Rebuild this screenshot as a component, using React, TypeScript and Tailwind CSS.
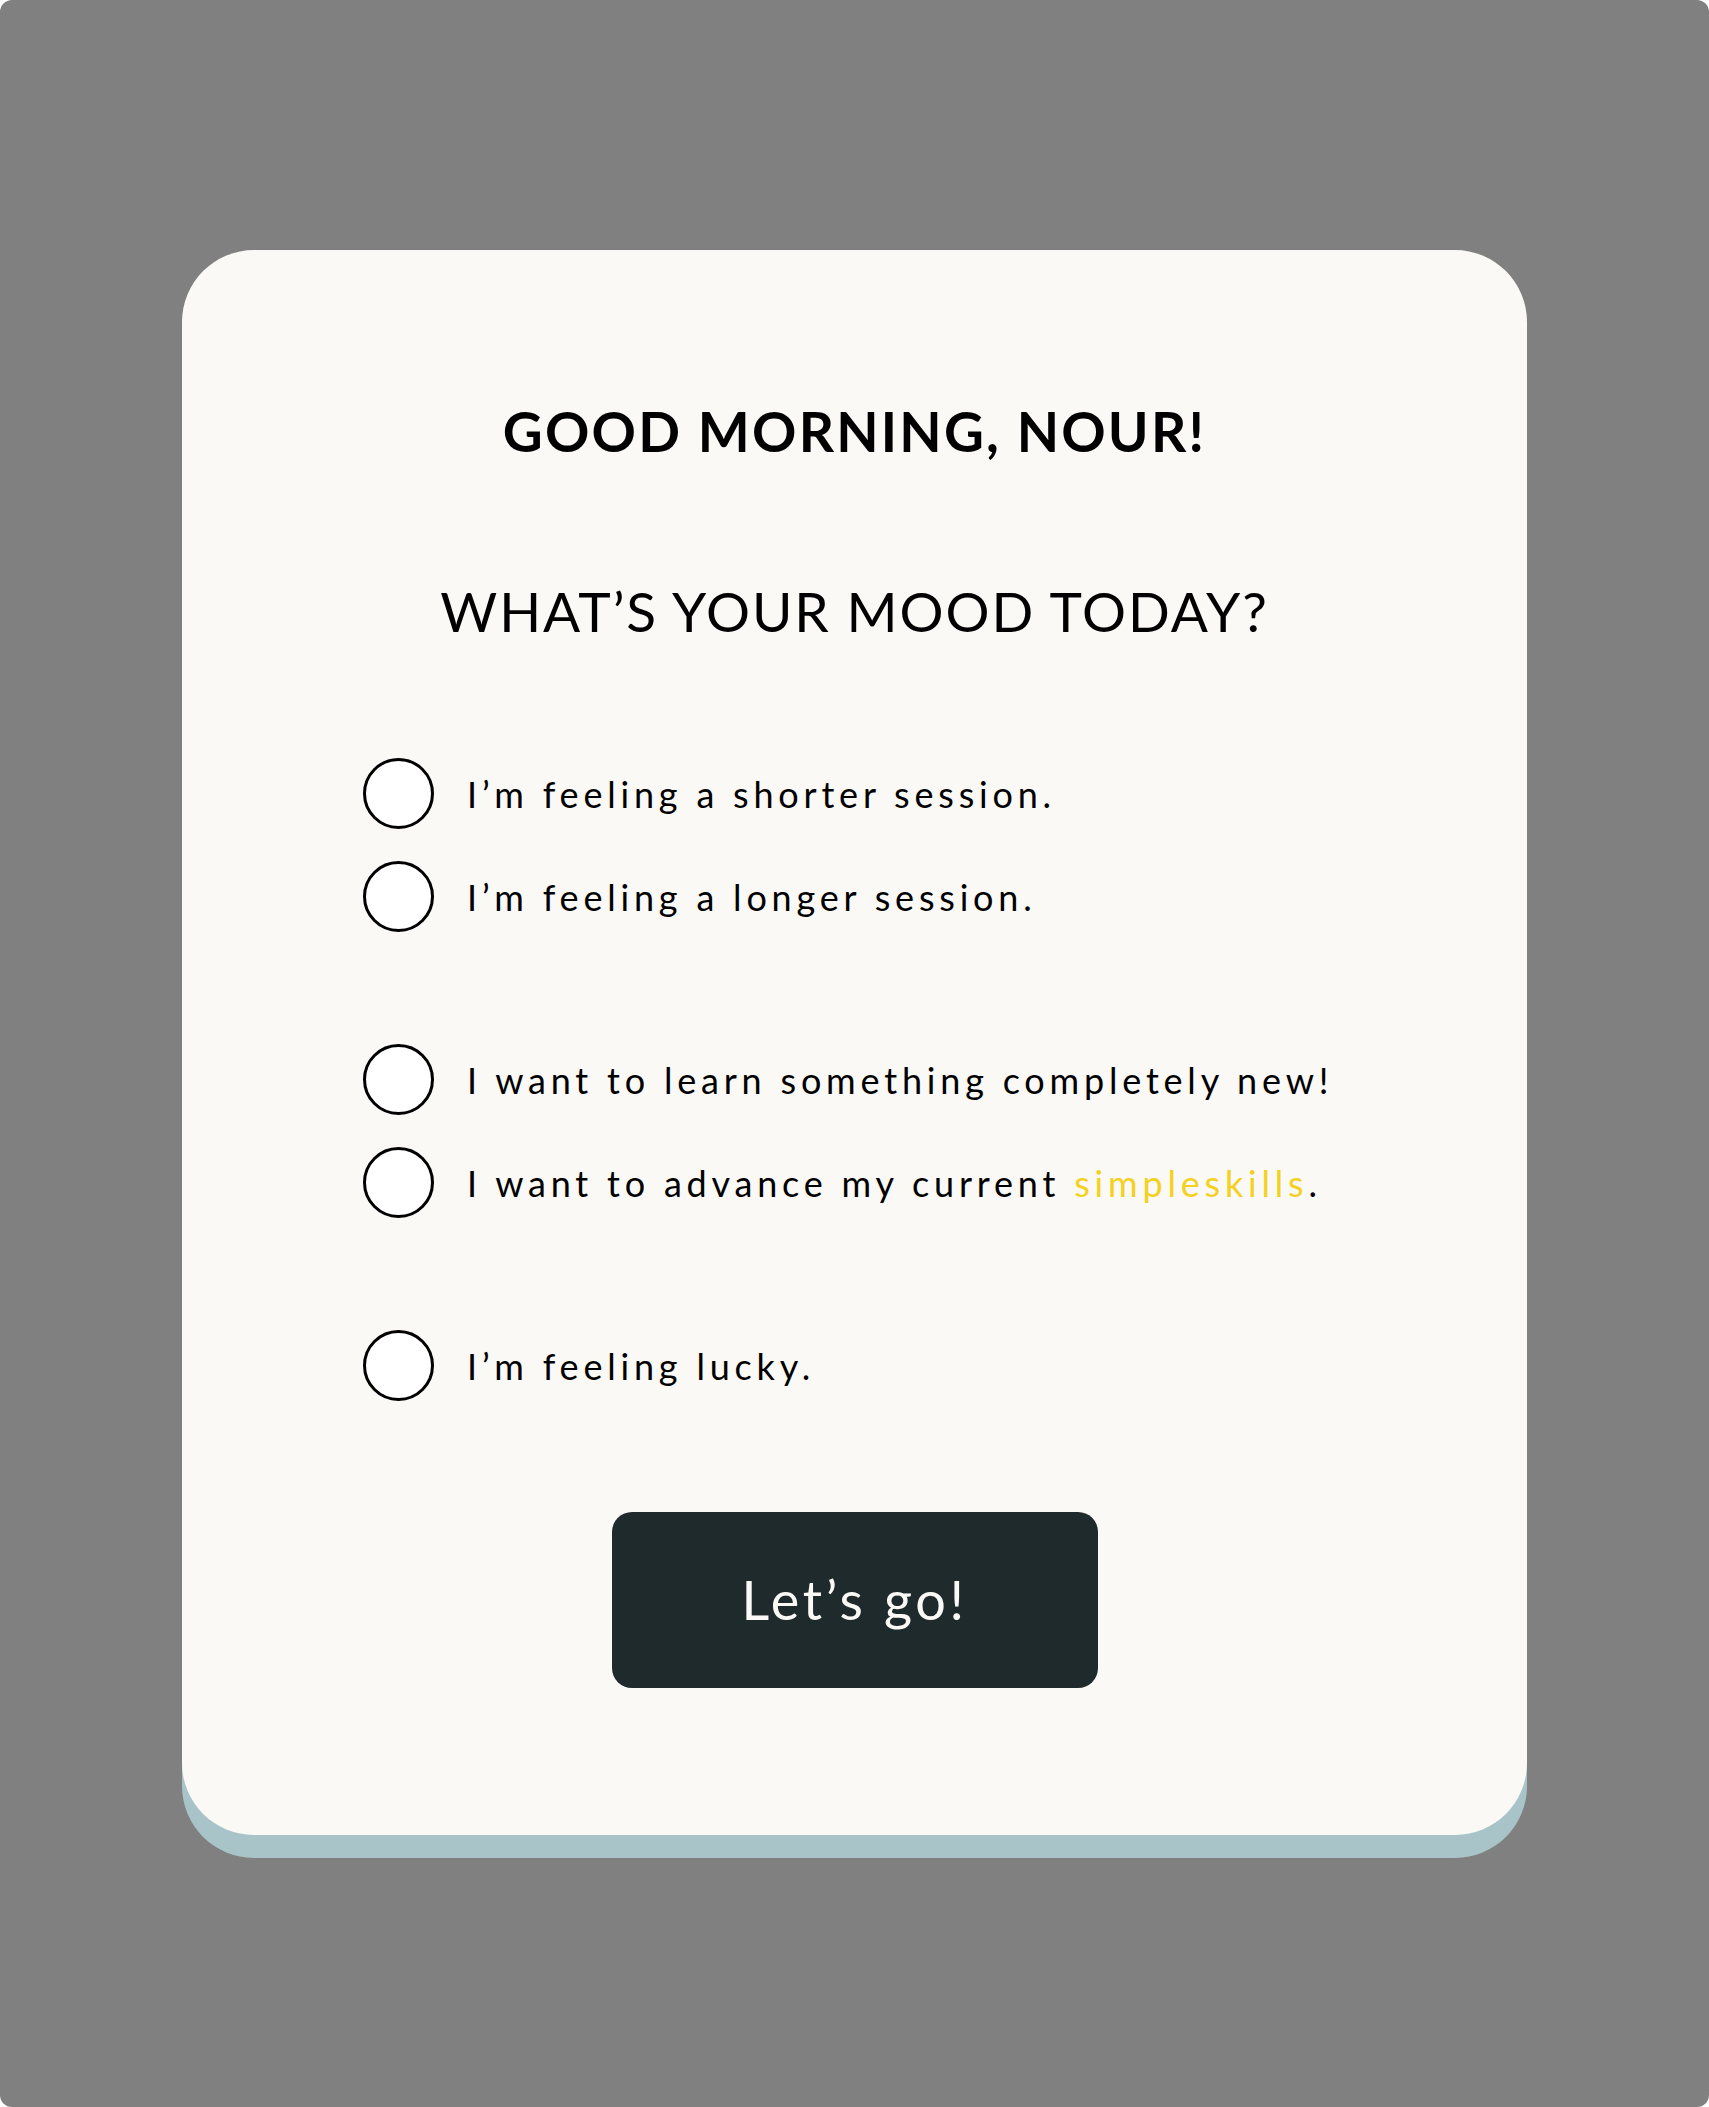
import { useState } from 'react';

const groups = [
  [
    { id: 'short', label: 'I’m feeling a shorter session.' },
    { id: 'long', label: 'I’m feeling a longer session.' }
  ],
  [
    { id: 'new', label: 'I want to learn something completely new!' },
    { id: 'advance', label: 'I want to advance my current', accent: 'simpleskills' }
  ],
  [{ id: 'lucky', label: 'I’m feeling lucky.' }]
];

export default function App() {
  const [mood, setMood] = useState<string | null>(null);

  return (
    <div className="bg-white w-[1709px] h-[2107px]">
      <div className="bg-[#808080] w-full h-full rounded-[12px] pt-[250px] px-[182px] font-['Lato',sans-serif]">
        {/* Card */}
        <div className="bg-[#faf9f6] h-[1585px] rounded-[72px] shadow-[0_23px_0_#a9c4c8] flex flex-col items-center pt-[154px]">
          <h1 className="text-[55px] leading-[55px] font-bold text-black tracking-[2.2px]">
            GOOD MORNING, NOUR!
          </h1>
          <h2 className="mt-[125px] text-[55px] leading-[55px] font-normal text-black tracking-[1.9px]">
            WHAT’S YOUR MOOD TODAY?
          </h2>

          <div className="self-start ml-[181px] mt-[119px] flex flex-col gap-[112px]">
            {groups.map((group, gi) => (
              <div key={gi} className="flex flex-col gap-[32px]">
                {group.map((opt) => (
                  <button
                    key={opt.id}
                    onClick={() => setMood(opt.id)}
                    className="flex items-center gap-[33px] text-left"
                  >
                    <span className="w-[71px] h-[71px] rounded-full border-[3px] border-black bg-white flex items-center justify-center shrink-0">
                      {mood === opt.id && <span className="w-[41px] h-[41px] rounded-full bg-[#1e2a2b]" />}
                    </span>
                    <span className="text-[36px] leading-none text-black tracking-[4.8px]">
                      {opt.label}
                      {opt.accent && (
                        <>
                          {' '}
                          <span className="text-[#f4d11f]">{opt.accent}</span>.
                        </>
                      )}
                    </span>
                  </button>
                ))}
              </div>
            ))}
          </div>

          <button className="mt-[111px] w-[486px] h-[176px] rounded-[20px] bg-[#1e2a2b] text-[#faf9f6] text-[54px] leading-none tracking-[3.6px]">
            Let’s go!
          </button>
        </div>
      </div>
    </div>
  );
}
